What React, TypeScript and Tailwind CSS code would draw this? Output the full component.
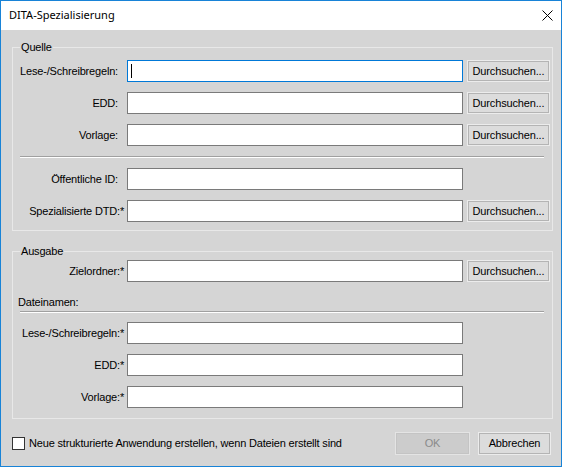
import React from 'react';

const font = "font-['Liberation_Sans',Arial,sans-serif]";

function Field({ focused = false }: { focused?: boolean }) {
  return (
    <div
      className={`relative ml-[9px] h-[22px] w-[336px] bg-white border ${
        focused ? 'border-[#0078d7]' : 'border-[#7a7a7a]'
      }`}
    >
      {focused && <span className="absolute left-[3px] top-[3px] h-[14px] w-px bg-black" />}
    </div>
  );
}

function Browse() {
  return (
    <button className="ml-[4px] h-[22px] w-[83px] border border-[#ececec] bg-[#dcdcdc] shadow-[inset_0_0_0_1px_#b4b4b4] text-[11px] text-black leading-none tracking-[-0.15px]">
      Durchsuchen...
    </button>
  );
}

function Row({
  label,
  required = false,
  browse = false,
  focused = false,
  className = '',
}: {
  label: string;
  required?: boolean;
  browse?: boolean;
  focused?: boolean;
  className?: string;
}) {
  return (
    <div className={`flex items-center h-[22px] ${className}`}>
      <div className="w-[105px] text-right whitespace-nowrap">
        {label}
        {required && <span className="mr-[-6px]">*</span>}
      </div>
      <Field focused={focused} />
      {browse && <Browse />}
    </div>
  );
}

function Separator({ className = '' }: { className?: string }) {
  return <div className={`ml-[7px] w-[524px] h-[2px] border-t border-[#a0a0a0] border-b border-b-white ${className}`} />;
}

function Group({ title, children, className = '' }: { title: string; children: React.ReactNode; className?: string }) {
  return (
    <fieldset className={`w-[541px] border border-[#e8e8e8] ${className}`}>
      <legend className="ml-[7px] px-[1px] leading-[13px]">{title}</legend>
      {children}
    </fieldset>
  );
}

export default function App() {
  return (
    <div className={`w-[563px] h-[468px] bg-white ${font} text-[11px] tracking-[-0.18px] text-black`}>
      <div className="w-[562px] h-[467px] border border-[#1883d7] flex flex-col">
        {/* title bar */}
        <div className="h-[29px] bg-white flex items-center justify-between pl-[8px] pr-[8px]">
          <span className="font-['Noto_Sans',sans-serif] text-[11px] tracking-normal text-black">DITA-Spezialisierung</span>
          <svg width="11" height="11" viewBox="0 0 11 11" className="text-black">
            <path d="M0.5 0.5 L10.5 10.5 M10.5 0.5 L0.5 10.5" stroke="currentColor" strokeWidth="1" fill="none" />
          </svg>
        </div>

        {/* body */}
        <div className="flex-1 bg-[#d5d5d5] pl-[11px] pt-[11px]">
          <Group title="Quelle">
            <Row label="Lese-/Schreibregeln:" browse focused className="mt-[6px]" />
            <Row label="EDD:" browse className="mt-[10px]" />
            <Row label="Vorlage:" browse className="mt-[10px]" />
            <Separator className="mt-[10px]" />
            <Row label="Öffentliche ID:" className="mt-[10px]" />
            <Row label="Spezialisierte DTD:" required browse className="mt-[10px]" />
            <div className="h-[8px]" />
          </Group>

          <Group title="Ausgabe" className="mt-[14px]">
            <Row label="Zielordner:" required browse className="mt-[2px]" />
            <div className="mt-[14px] ml-[5px] leading-[13px]">Dateinamen:</div>
            <Separator className="mt-[2px]" />
            <Row label="Lese-/Schreibregeln:" required className="mt-[9px]" />
            <Row label="EDD:" required className="mt-[10px]" />
            <Row label="Vorlage:" required className="mt-[10px]" />
            <div className="h-[10px]" />
          </Group>

          <div className="mt-[13px] flex items-center h-[23px] w-[541px]">
            <div className="h-[13px] w-[13px] border border-[#333] bg-white" />
            <span className="ml-[4px]">Neue strukturierte Anwendung erstellen, wenn Dateien erstellt sind</span>
            <button
              disabled
              className="ml-auto h-[23px] w-[75px] border border-[#e4e4e4] bg-[#cccccc] shadow-[inset_0_0_0_1px_#c4c4c4] text-[#8a8a8a] leading-none"
            >
              OK
            </button>
            <button className="ml-[8px] mr-[2px] h-[23px] w-[73px] border border-[#ececec] bg-[#dcdcdc] shadow-[inset_0_0_0_1px_#b4b4b4] text-black leading-none">
              Abbrechen
            </button>
          </div>
        </div>
      </div>
    </div>
  );
}
